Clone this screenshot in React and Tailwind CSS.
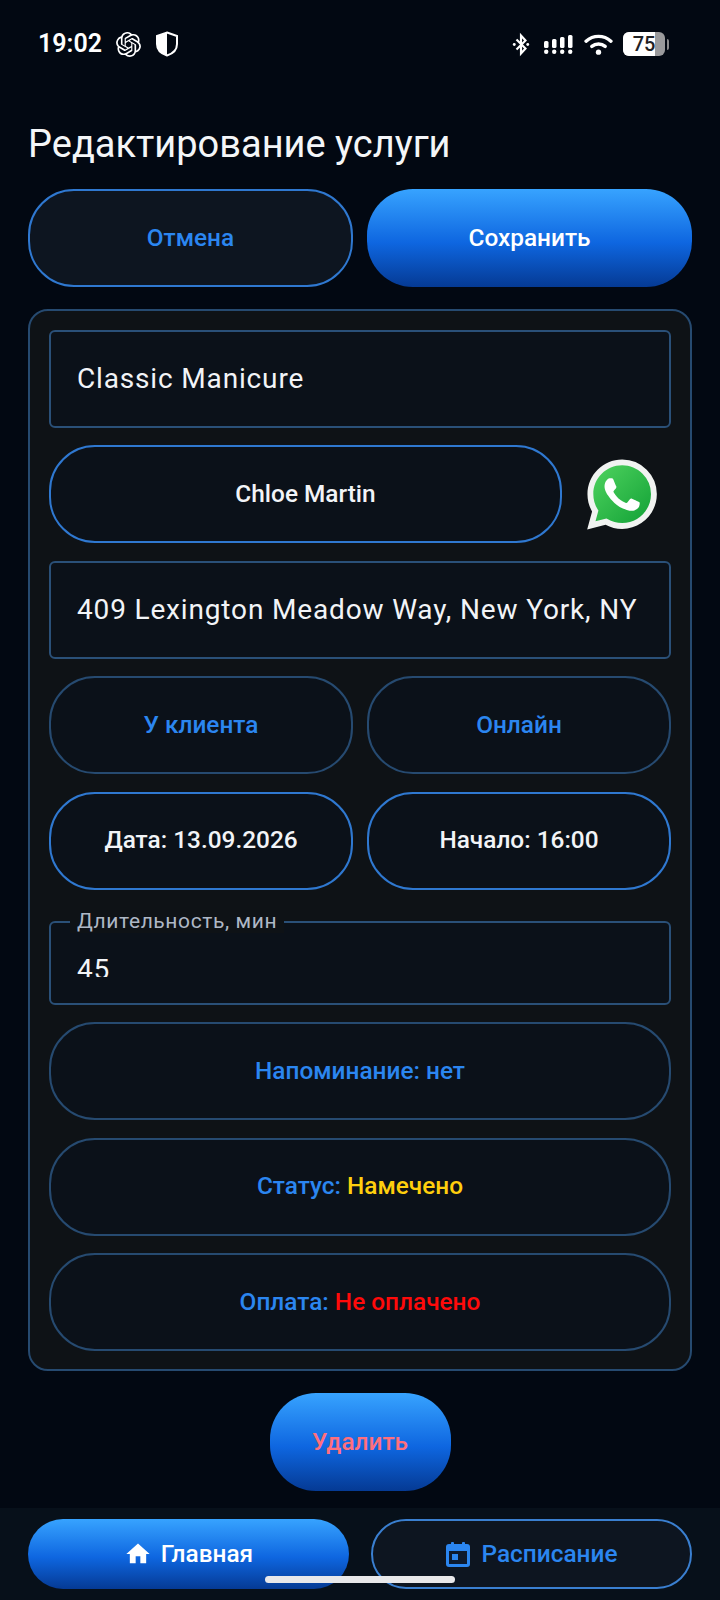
import React from 'react';
import { MdHome } from 'react-icons/md';
import { SiOpenai } from 'react-icons/si';

const font = { fontFamily: 'Roboto, sans-serif' };

function ShieldIcon() {
  return (
    <svg width="24" height="26" viewBox="0 0 24 26">
      <path d="M12 1.500 22 5v8c0 5.500-4 9.600-10 11.500C6 22.600 2 18.500 2 13V5z" fill="none" stroke="#fff" strokeWidth="2" />
      <path d="M12 1.500V24.500C6 22.600 2 18.500 2 13V5z" fill="#fff" />
    </svg>
  );
}

function BluetoothIcon() {
  return (
    <svg width="18" height="25" viewBox="0 0 20 26" fill="none" stroke="#fff" strokeWidth="2.400">
      <path d="M5 7.500 15 17.500 10 23V3l5 5.500L5 18.500" />
      <circle cx="2.500" cy="13" r="1.600" fill="#fff" stroke="none" />
      <circle cx="17.500" cy="13" r="1.600" fill="#fff" stroke="none" />
    </svg>
  );
}

function SignalIcon() {
  return (
    <svg width="29" height="19" viewBox="0 0 29 19" fill="#fff">
      <rect x="0" y="6" width="4.500" height="7" rx="1.500" />
      <rect x="8" y="4" width="4.500" height="9" rx="1.500" />
      <rect x="16" y="2" width="4.500" height="11" rx="1.500" />
      <rect x="24" y="0" width="4.500" height="13" rx="1.500" />
      <circle cx="2.200" cy="16.800" r="2.200" />
      <circle cx="10.200" cy="16.800" r="2.200" />
      <circle cx="18.200" cy="16.800" r="2.200" />
      <circle cx="26.200" cy="16.800" r="2.200" />
    </svg>
  );
}

function WifiIcon() {
  return (
    <svg width="29" height="21" viewBox="0 0 30 22" fill="none" stroke="#fff" strokeWidth="3.600" strokeLinecap="round">
      <path d="M2 7.500C9.500 .8 20.500 .8 28 7.500" />
      <path d="M8 13c4-3.300 10-3.300 14 0" />
      <circle cx="15" cy="19" r="2.800" fill="#fff" stroke="none" />
    </svg>
  );
}

function Battery() {
  return (
    <div className="flex items-center gap-[2px]">
      <div className="relative w-[42px] h-[24px] rounded-[6px] overflow-hidden bg-[#9a9a9c] flex items-center justify-center">
        <div className="absolute left-0 top-0 bottom-0 w-[32px] bg-white" />
        <span className="relative text-[20px] font-medium text-[#1f2124] leading-none">75</span>
      </div>
      <div className="w-[2px] h-[11px] rounded-r bg-[#8a8a8c]" />
    </div>
  );
}

function WhatsAppIcon() {
  return (
    <svg width="70" height="71" viewBox="0 0 24 24">
      <defs>
        <linearGradient id="wa" x1="0" y1="0" x2="1" y2="1">
          <stop offset="0" stopColor="#4fd35f" />
          <stop offset="1" stopColor="#12a136" />
        </linearGradient>
      </defs>
      <path fill="#f1f3f1" d="M20.464 3.488A11.815 11.815 0 0012.05 0C5.495 0 .16 5.335.157 11.892c0 2.096.547 4.142 1.588 5.945L.057 24l6.305-1.654a11.882 11.882 0 005.683 1.448h.005c6.554 0 11.89-5.335 11.893-11.893a11.821 11.821 0 00-3.48-8.413z" />
      <path fill="url(#wa)" d="M12.051 21.785h-.004a9.87 9.87 0 01-5.031-1.378l-.361-.214-3.741.982.998-3.648-.235-.374a9.86 9.86 0 01-1.51-5.26c.001-5.45 4.436-9.884 9.888-9.884 2.64 0 5.122 1.03 6.988 2.898a9.825 9.825 0 012.893 6.994c-.003 5.45-4.437 9.884-9.885 9.884z" />
      <path fill="#fff" d="M17.472 14.382c-.297-.149-1.758-.867-2.03-.967-.273-.099-.471-.148-.67.15-.197.297-.767.966-.94 1.164-.173.199-.347.223-.644.075-.297-.15-1.255-.463-2.39-1.475-.883-.788-1.48-1.761-1.653-2.059-.173-.297-.018-.458.13-.606.134-.133.298-.347.446-.52.149-.174.198-.298.298-.497.099-.198.05-.371-.025-.52-.075-.149-.669-1.612-.916-2.207-.242-.579-.487-.5-.669-.51-.173-.008-.371-.01-.57-.01-.198 0-.52.074-.792.372-.272.297-1.04 1.016-1.04 2.479 0 1.462 1.065 2.875 1.213 3.074.149.198 2.096 3.2 5.077 4.487.709.306 1.262.489 1.694.625.712.227 1.36.195 1.871.118.571-.085 1.758-.719 2.006-1.413.248-.694.248-1.289.173-1.413-.074-.124-.272-.198-.57-.347z" />
    </svg>
  );
}

function CalendarIcon() {
  return (
    <svg width="24" height="25" viewBox="0 0 24 25">
      <rect x="5" y="0" width="3" height="4" rx="1" fill="#2b86f0" />
      <rect x="16" y="0" width="3" height="4" rx="1" fill="#2b86f0" />
      <rect x="0" y="2" width="24" height="23" rx="3" fill="#2b86f0" />
      <rect x="3" y="9" width="18" height="13" fill="#0d1a2e" />
      <rect x="6" y="12" width="6" height="6" fill="#2b86f0" />
    </svg>
  );
}

const GRADIENT = 'bg-[linear-gradient(180deg,#37a3ff_0%,#0e66e0_55%,#053a94_100%)]';

function PillButton({ children, className = '' }) {
  return (
    <div className={`h-[98px] rounded-[46px] flex items-center justify-center text-[24.400px] font-medium ${className}`}>
      {children}
    </div>
  );
}

function TextField({ children }) {
  return (
    <div className="h-[98px] rounded-[6px] border-2 border-[#2a5078] bg-[#0b1119] flex items-center pl-[26px] text-[28px] tracking-[0.84px] text-[#f2f4f7] whitespace-nowrap">
      {children}
    </div>
  );
}

export default function App() {
  return (
    <div style={font} className="relative w-[720px] h-[1600px] bg-[#020812] flex flex-col overflow-hidden text-white">
      <div className="h-[92px] pl-[38px] pr-[39px] pt-[29px] flex justify-between items-start">
        <div className="flex items-center h-[30px]">
          <span className="text-[25px] font-semibold w-[64px]">19:02</span>
          <SiOpenai size={25} className="ml-[14px]" color="#fff" />
          <span className="ml-[14px]"><ShieldIcon /></span>
        </div>
        <div className="flex items-center h-[30px] mr-[12px]">
          <BluetoothIcon />
          <span className="ml-[14px]"><SignalIcon /></span>
          <span className="ml-[11px]"><WifiIcon /></span>
          <span className="ml-[10px]"><Battery /></span>
        </div>
      </div>

      <div className="px-[28px] h-[97px] flex items-start">
        <h1 className="text-[38px] leading-[48px] font-normal text-[#f4f6f8] mt-[28px]">Редактирование услуги</h1>
      </div>

      <div className="px-[28px] flex gap-[14px]">
        <PillButton className="w-[325px] border-2 border-[#2f78d0] bg-[#0d1520] text-[#2b86f0]">Отмена</PillButton>
        <PillButton className={`w-[325px] ${GRADIENT} text-white`}>Сохранить</PillButton>
      </div>

      <div className="mx-[28px] mt-[22px] h-[1062px] rounded-[20px] border-2 border-[#264a70] bg-[#0e1216] px-[19px] pt-[19px] flex flex-col gap-[17.400px]">
        <TextField>Classic Manicure</TextField>

        <div className="flex items-center">
          <PillButton className="w-[513px] border-2 border-[#2f78d0] bg-[#0b1119] text-[#f2f4f7]">Chloe Martin</PillButton>
          <span className="ml-[25px]"><WhatsAppIcon /></span>
        </div>

        <TextField>409 Lexington Meadow Way, New York, NY</TextField>

        <div className="flex gap-[14px]">
          <PillButton className="flex-1 border-2 border-[#264a70] bg-[#0b1119] text-[#2b86f0]">У клиента</PillButton>
          <PillButton className="flex-1 border-2 border-[#264a70] bg-[#0b1119] text-[#2b86f0]">Онлайн</PillButton>
        </div>

        <div className="flex gap-[14px]">
          <PillButton className="flex-1 border-2 border-[#2f78d0] bg-[#0b1119] text-[#f2f4f7]">Дата: 13.09.2026</PillButton>
          <PillButton className="flex-1 border-2 border-[#2f78d0] bg-[#0b1119] text-[#f2f4f7]">Начало: 16:00</PillButton>
        </div>

        <div className="relative h-[84px] mt-[14px] rounded-[6px] border-2 border-[#2a5078] bg-[#0b1119] pl-[26px]">
          <span className="absolute left-[19px] top-[-14px] px-[7px] bg-[#0e1216] text-[21px] leading-[24px] tracking-[0.6px] text-[#aeb8c6] whitespace-nowrap">Длительность, мин</span>
          <div className="h-[25px] mt-[29px] overflow-hidden text-[28px] leading-[36px] tracking-[0.84px] text-[#f2f4f7]">45</div>
        </div>

        <PillButton className="border-2 border-[#264a70] bg-[#0b1119] text-[#2b86f0]">Напоминание: нет</PillButton>
        <PillButton className="border-2 border-[#264a70] bg-[#0b1119] text-[#2b86f0]">
          Статус:&nbsp;<span className="text-[#ffcf0d]">Намечено</span>
        </PillButton>
        <PillButton className="border-2 border-[#264a70] bg-[#0b1119] text-[#2b86f0]">
          Оплата:&nbsp;<span className="text-[#ff0a0a]">Не оплачено</span>
        </PillButton>
      </div>

      <div className="flex justify-center mt-[22px]">
        <PillButton className={`w-[181px] ${GRADIENT} text-[#ff6f7d]`}>Удалить</PillButton>
      </div>

      <div className="mt-[17px] flex-1 bg-[#07101a] px-[28px] pt-[11px] flex justify-between">
        <div className={`w-[321px] h-[70px] rounded-[35px] ${GRADIENT} flex items-center justify-center gap-[9px] text-[24.400px] font-medium text-white`}>
          <MdHome size={28} />
          Главная
        </div>
        <div className="w-[321px] h-[70px] rounded-[35px] border-2 border-[#3a7fd0] bg-[#0d1520] flex items-center justify-center gap-[12px] text-[24.400px] font-medium text-[#2b86f0]">
          <CalendarIcon />
          Расписание
        </div>
      </div>

      <div className="absolute left-[265px] top-[1576px] w-[190px] h-[7px] rounded-full bg-[#e8e8ea]" />
    </div>
  );
}
